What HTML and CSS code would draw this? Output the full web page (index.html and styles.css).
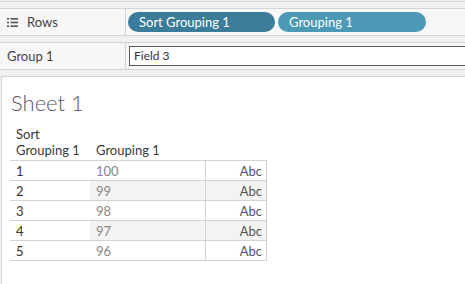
FILE: index.html
```html
<!DOCTYPE html>
<html lang="en">
<head>
  <meta charset="UTF-8">
  <meta name="viewport" content="width=device-width, initial-scale=1.0">
  <title>Sheet 1</title>
  <link rel="stylesheet" href="styles.css">
</head>
<body>
  <div class="top-stub"></div>

  <!-- Rows shelf -->
  <div class="shelf">
    <div class="shelf-label">
      <svg class="rows-icon" width="11" height="9" viewBox="0 0 11 9">
        <rect x="0" y="0" width="2" height="1.6" fill="#555"/>
        <rect x="3.5" y="0" width="7.5" height="1.6" fill="#555"/>
        <rect x="0" y="3.7" width="2" height="1.6" fill="#555"/>
        <rect x="3.5" y="3.7" width="7.5" height="1.6" fill="#555"/>
        <rect x="0" y="7.4" width="2" height="1.6" fill="#555"/>
        <rect x="3.5" y="7.4" width="7.5" height="1.6" fill="#555"/>
      </svg>
      Rows
    </div>
    <div class="shelf-body">
      <span class="pill pill-dark">Sort Grouping 1</span>
      <span class="pill pill-light">Grouping 1</span>
    </div>
  </div>

  <!-- Group filter -->
  <div class="shelf">
    <div class="shelf-label">Group 1</div>
    <div class="shelf-body">
      <div class="field-input">Field 3</div>
    </div>
  </div>

  <div class="sheet">
    <h1 class="sheet-title">Sheet 1</h1>
    <div class="grid">
      <div class="head">Sort<br>Grouping 1</div>
      <div class="head">Grouping 1</div>
      <div class="head"></div>

      <div class="cell num">1</div>
      <div class="cell val">100</div>
      <div class="cell abc">Abc</div>

      <div class="cell num">2</div>
      <div class="cell val alt">99</div>
      <div class="cell abc alt">Abc</div>

      <div class="cell num">3</div>
      <div class="cell val">98</div>
      <div class="cell abc">Abc</div>

      <div class="cell num">4</div>
      <div class="cell val alt">97</div>
      <div class="cell abc alt">Abc</div>

      <div class="cell num">5</div>
      <div class="cell val">96</div>
      <div class="cell abc">Abc</div>
    </div>
  </div>
</body>
</html>
```

FILE: styles.css
```css
body {
  margin: 0;
  background-color: #f0f0f0;
  font-family: 'Lato', 'Liberation Sans', sans-serif;
  color: #333333;
  overflow: hidden;
}
.top-stub {
  height: 1px;
  border-bottom: 1px solid #d4d4d4;
  margin-bottom: 6px;
}
.shelf {
  display: flex;
  height: 26px;
  background-color: #f7f7f7;
  border-top: 1px solid #d4d4d4;
  border-bottom: 1px solid #d4d4d4;
  margin-bottom: 6px;
}
.shelf-label {
  width: 118px;
  padding-left: 7px;
  border-right: 1px solid #d4d4d4;
  display: flex;
  align-items: center;
  font-size: 13px;
  color: #444444;
}
.rows-icon {
  margin-right: 9px;
  margin-top: 1px;
}
.shelf-body {
  flex: 1;
  display: flex;
  align-items: center;
  gap: 3px;
  padding-left: 2px;
  overflow: hidden;
}
.pill {
  box-sizing: border-box;
  height: 20px;
  border-radius: 10px;
  padding-left: 11px;
  font-size: 13px;
  line-height: 20px;
  color: #ffffff;
  white-space: nowrap;
}
.pill-dark {
  width: 147px;
  background-color: #3a7c99;
}
.pill-light {
  width: 148px;
  background-color: #4b99b5;
}
.field-input {
  flex: none;
  box-sizing: border-box;
  width: 360px;
  height: 20px;
  margin-left: 1px;
  border: 1px solid #5a5a5a;
  background-color: #ffffff;
  padding-left: 4px;
  font-size: 12px;
  line-height: 18px;
  color: #333333;
}
.sheet {
  margin-left: 1px;
  height: 200px;
  background-color: #ffffff;
  border-top: 1px solid #d4d4d4;
  border-left: 1px solid #d4d4d4;
  padding: 13px 0 0 8px;
}
.sheet-title {
  margin: 0 0 10px 1px;
  font-size: 22px;
  font-weight: 300;
  line-height: 26px;
  color: #5a5566;
}
.grid {
  display: grid;
  grid-template-columns: 80px 116px 61px;
  width: 257px;
}
.head {
  padding: 0 0 2px 6px;
  font-size: 13px;
  line-height: 16px;
  color: #3d3833;
  align-self: end;
}
.cell {
  height: 19px;
  border-top: 1px solid #d4d4d4;
  font-size: 13px;
  line-height: 20px;
  padding: 0 6px;
}
.grid .cell:nth-last-child(-n+3) {
  border-bottom: 1px solid #d4d4d4;
}
.num {
  color: #333333;
}
.val {
  color: #888888;
  border-right: 1px solid #d4d4d4;
}
.abc {
  text-align: right;
  color: #555555;
  padding-right: 4px;
  border-right: 1px solid #d4d4d4;
}
.alt {
  background-color: #f3f3f3;
}
```
